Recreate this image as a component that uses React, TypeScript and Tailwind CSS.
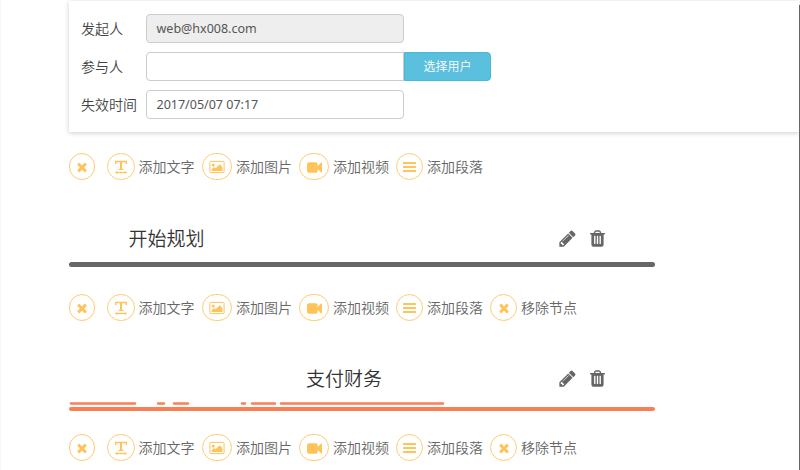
import React from "react";

const PATHS = {
  times:
    "M1490 1322q0 40-28 68l-136 136q-28 28-68 28t-68-28l-294-294-294 294q-28 28-68 28t-68-28l-136-136q-28-28-28-68t28-68l294-294-294-294q-28-28-28-68t28-68l136-136q28-28 68-28t68 28l294 294 294-294q28-28 68-28t68 28l136 136q28 28 28 68t-28 68l-294 294 294 294q28 28 28 68z",
  video:
    "M1792 352v1088q0 42-39 59-13 5-25 5-27 0-45-19l-403-403v166q0 119-84.5 203.5t-203.5 84.5h-704q-119 0-203.5-84.5t-84.5-203.5v-704q0-119 84.5-203.5t203.5-84.5h704q119 0 203.5 84.5t84.5 203.5v165l403-402q18-19 45-19 12 0 25 5 39 17 39 59z",
  pencil:
    "M491 1536l91-91-235-235-91 91v107h128v128h107zm523-928q0-22-22-22-10 0-17 7l-542 542q-7 7-7 17 0 22 22 22 10 0 17-7l542-542q7-7 7-17zm-54-192l416 416-832 832h-416v-416zm683 96q0 53-37 90l-166 166-416-416 166-165q36-38 90-38 53 0 91 38l235 234q37 39 37 91z",
  trash:
    "M704 1376v-704q0-14-9-23t-23-9h-64q-14 0-23 9t-9 23v704q0 14 9 23t23 9h64q14 0 23-9t9-23zm256 0v-704q0-14-9-23t-23-9h-64q-14 0-23 9t-9 23v704q0 14 9 23t23 9h64q14 0 23-9t9-23zm256 0v-704q0-14-9-23t-23-9h-64q-14 0-23 9t-9 23v704q0 14 9 23t23 9h64q14 0 23-9t9-23zm-544-992h448l-48-117q-7-9-17-11h-317q-10 2-17 11zm928 32v64q0 14-9 23t-23 9h-96v948q0 83-47 143.5t-113 60.5h-832q-66 0-113-58.5t-47-141.5v-952h-96q-14 0-23-9t-9-23v-64q0-14 9-23t23-9h309l70-167q15-37 54-63t79-26h320q40 0 79 26t54 63l70 167h309q14 0 23 9t9 23z",
};

function Glyph({ name, className }: { name: keyof typeof PATHS; className: string }) {
  return (
    <svg viewBox="0 0 1792 1792" fill="currentColor" className={className}>
      <path d={PATHS[name]} />
    </svg>
  );
}

function TextIcon() {
  return (
    <svg viewBox="0 0 14 14" className="size-3.5" fill="none" stroke="currentColor">
      <path d="M1.7 4V1.5H12.3V4" strokeWidth="1.4" />
      <path d="M7 1.4V9.4" strokeWidth="2" />
      <path d="M4.6 9.4H9.4" strokeWidth="1.2" />
      <path d="M1.4 12.5H12.6" strokeWidth="1.3" />
      <path d="M2.6 11.4V13.6M11.4 11.4V13.6" strokeWidth="1.4" />
    </svg>
  );
}

function ImageIcon() {
  return (
    <svg viewBox="0 0 16 14" className="h-3.5 w-4" fill="currentColor">
      <rect x="0.9" y="1.4" width="14.2" height="11.2" rx="0.8" fill="none" stroke="currentColor" />
      <circle cx="4.2" cy="4.9" r="1.5" />
      <path d="M2.6 11V9.2L5.1 6.9L6.6 8.3L10.7 4.3L13.4 7V11Z" />
    </svg>
  );
}

function BarsIcon() {
  return (
    <svg viewBox="0 0 12 12" className="h-3 w-[13px]" preserveAspectRatio="none" fill="currentColor">
      <rect y="1" width="12" height="2" rx="0.5" />
      <rect y="5" width="12" height="2" rx="0.5" />
      <rect y="9" width="12" height="2" rx="0.5" />
    </svg>
  );
}

function Circle({ width, children }: { width: string; children: React.ReactNode }) {
  return (
    <span
      className={`flex h-[27px] shrink-0 items-center justify-center rounded-full border border-[#ffcb70] pt-px text-[#ffc35a] ${width}`}
    >
      {children}
    </span>
  );
}

function Toolbar({ removable = false }: { removable?: boolean }) {
  const label = "ml-1 w-14 shrink-0 leading-[27px] text-sm text-[#666]";
  return (
    <div className="flex h-[27px] items-center whitespace-nowrap">
      <Circle width="w-[26px] mr-3">
        <Glyph name="times" className="-ml-px size-3.5" />
      </Circle>
      <Circle width="w-[27.5px]">
        <TextIcon />
      </Circle>
      <span className={label}>添加文字</span>
      <Circle width="ml-[7.5px] w-[30px]">
        <ImageIcon />
      </Circle>
      <span className={label}>添加图片</span>
      <Circle width="ml-[7px] w-[30px]">
        <Glyph name="video" className="size-[15px]" />
      </Circle>
      <span className={label}>添加视频</span>
      <Circle width="ml-[7px] w-[27px]">
        <BarsIcon />
      </Circle>
      <span className={label}>添加段落</span>
      {removable && (
        <>
          <Circle width="ml-[7px] w-[27px]">
            <Glyph name="times" className="size-3.5" />
          </Circle>
          <span className={label}>移除节点</span>
        </>
      )}
    </div>
  );
}

function NodeTitle({ title, indent }: { title: string; indent: string }) {
  return (
    <div className={`flex h-7 w-[586px] items-center ${indent}`}>
      <h2 className="text-[19px] leading-7 text-[#333]">{title}</h2>
      <div className="mr-12 mb-0.5 ml-auto flex items-center gap-[11px] text-[#666]">
        <Glyph name="pencil" className="size-[19px]" />
        <Glyph name="trash" className="size-[19px]" />
      </div>
    </div>
  );
}

function Field({ label, children }: { label: string; children: React.ReactNode }) {
  return (
    <div className="flex h-[30px] items-start">
      <span className="w-[65px] shrink-0 text-sm leading-[30px] text-[#444]">{label}</span>
      {children}
    </div>
  );
}

export default function App() {
  const box =
    "flex h-[29px] w-[258px] items-center border border-[#ccc] px-[9.5px] pt-px text-[12.5px] font-normal text-[#555]";
  return (
    <div className="flex h-[470px] w-[800px] overflow-hidden bg-white font-['Noto_Sans','Noto_Sans_CJK_SC',sans-serif] font-[350]">
      <div className="w-px shrink-0 bg-[#f7f7f7]" />
      <main className="ml-[68px] flex w-[730px] shrink-0 flex-col">
        <section className="mt-px flex h-[131px] flex-col gap-2 bg-white pt-[13px] pl-[12px] shadow-[0_1px_5px_rgba(0,0,0,0.2)]">
          <Field label="发起人">
            <div className={`${box} rounded bg-[#eee]`}>web@hx008.com</div>
          </Field>
          <Field label="参与人">
            <div className={`${box} rounded-l`} />
            <button className="h-[29px] w-[87px] rounded-r border border-[#46b8da] bg-[#5bc0de] text-xs text-white">
              选择用户
            </button>
          </Field>
          <Field label="失效时间">
            <div className={`${box} rounded`}>2017/05/07 07:17</div>
          </Field>
        </section>

        <div className="mt-[21px]">
          <Toolbar />
        </div>

        <div className="mt-[45px]">
          <NodeTitle title="开始规划" indent="pl-[59.5px]" />
          <div className="mt-[9px] h-[5px] w-[586px] rounded-full bg-[#666]" />
        </div>

        <div className="mt-[27px]">
          <Toolbar removable />
        </div>

        <div className="mt-[44px]">
          <NodeTitle title="支付财务" indent="pl-[237px]" />
          <svg viewBox="0 0 586 3" className="mt-[9px] h-[3px] w-[586px]" stroke="#fa7f55" strokeWidth="2.6" strokeLinecap="round">
            <path d="M2 1.5H66M89 1.5H95M105 1.5H119M173 1.5H176M183 1.5H206M212 1.5H374" />
          </svg>
          <div className="mt-[2px] h-1 w-[586px] rounded-full bg-[#fa7f55]" />
        </div>

        <div className="mt-[23px]">
          <Toolbar removable />
        </div>
      </main>
      <div className="mt-[5px] w-px shrink-0 bg-[#666]" />
    </div>
  );
}
